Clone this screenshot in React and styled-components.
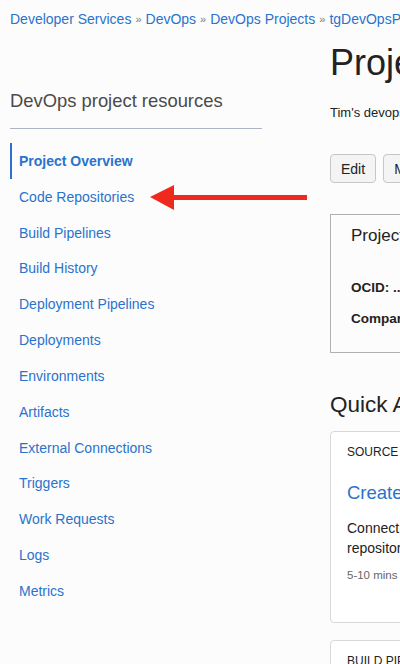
import React from "react";
import styled, { createGlobalStyle } from "styled-components";

const GlobalStyle = createGlobalStyle`
  html, body {
    margin: 0;
    padding: 0;
    background: #fcfcfc;
    overflow: hidden;
  }
  body {
    font-family: "Liberation Sans", Arial, sans-serif;
    color: #222;
  }
`;

const Page = styled.div`
  position: relative;
  width: 400px;
  height: 664px;
  overflow: hidden;
  padding: 9px 0 0 10px;
  box-sizing: border-box;
`;

const Breadcrumbs = styled.nav`
  display: flex;
  align-items: center;
  gap: 4px;
  height: 20px;
  font-size: 14px;
  white-space: nowrap;
`;

const Crumb = styled.a`
  color: #2a73cc;
  text-decoration: none;
`;

const Sep = styled.span`
  color: #777;
  font-size: 11px;
`;

const Columns = styled.div`
  display: flex;
  align-items: flex-start;
  gap: 68px;
`;

const Sidebar = styled.aside`
  flex: 0 0 252px;
  padding-top: 60px;
`;

const SideTitle = styled.h2`
  margin: 0;
  padding-bottom: 15px;
  border-bottom: 1px solid #aab4c2;
  font-size: 18.4px;
  font-weight: 400;
  line-height: 24px;
  color: #4a4a4a;
`;

const NavList = styled.ul`
  list-style: none;
  margin: 14px 0 0;
  padding: 0;
`;

const NavItem = styled.li`
  height: 35.83px;
  display: flex;
  align-items: center;
  padding-left: 7px;
  border-left: 2px solid ${({ $active }) => ($active ? "#2a73cc" : "transparent")};
  font-size: 14px;
  font-weight: ${({ $active }) => ($active ? 700 : 400)};
  color: #2a73cc;
  white-space: nowrap;
`;

const Main = styled.main`
  flex: 0 0 600px;
  padding-top: 12px;
`;

const Title = styled.h1`
  margin: 0;
  font-size: 36px;
  font-weight: 400;
  line-height: 44px;
  color: #222;
`;

const Description = styled.p`
  margin: 19px 0 0;
  font-size: 13px;
  line-height: 18px;
`;

const Actions = styled.div`
  display: flex;
  gap: 7px;
  margin-top: 32px;
`;

const Button = styled.button`
  height: 29px;
  padding: 0 10px;
  border: 1px solid #c4c8cc;
  border-radius: 4px;
  background: #f4f4f4;
  font-family: "Liberation Sans", Arial, sans-serif;
  font-size: 14px;
  color: #222;
`;

const InfoBox = styled.section`
  margin-top: 31px;
  height: 139px;
  box-sizing: border-box;
  border: 1px solid #b0b0b0;
  padding: 10px 20px 0;
`;

const InfoTitle = styled.div`
  font-size: 17px;
  line-height: 22px;
`;

const InfoRow = styled.div`
  margin-top: ${({ $gap }) => $gap}px;
  font-size: 13.5px;
  line-height: 18px;
  font-weight: 700;
  white-space: nowrap;
`;

const SectionTitle = styled.h2`
  margin: 39px 0 0;
  font-size: 22.5px;
  font-weight: 400;
  line-height: 26px;
  color: #222;
`;

const Card = styled.div`
  margin-top: ${({ $top }) => $top}px;
  height: ${({ $height }) => $height}px;
  box-sizing: border-box;
  border: 1px solid #d8d8d8;
  border-radius: 4px;
  padding: 12px 16px 0;
  background: #fff;
`;

const CardLabel = styled.div`
  font-size: 12px;
  line-height: 16px;
  text-transform: uppercase;
  color: #222;
`;

const CardLink = styled.div`
  margin-top: 22px;
  font-size: 18.5px;
  line-height: 22px;
  color: #2a73cc;
`;

const CardText = styled.p`
  margin: 14px 0 0;
  font-size: 14px;
  line-height: 20px;
  width: 200px;
`;

const CardMeta = styled.div`
  margin-top: 9px;
  font-size: 11.5px;
  line-height: 16px;
  color: #666;
`;

const Arrow = styled.svg`
  position: absolute;
  left: 150px;
  top: 185px;
`;

const crumbs = ["Developer Services", "DevOps", "DevOps Projects", "tgDevOpsProject"];

const navItems = [
  "Project Overview",
  "Code Repositories",
  "Build Pipelines",
  "Build History",
  "Deployment Pipelines",
  "Deployments",
  "Environments",
  "Artifacts",
  "External Connections",
  "Triggers",
  "Work Requests",
  "Logs",
  "Metrics",
];

const App = () => {
  return (
    <>
      <GlobalStyle />
      <Page>
        <Breadcrumbs>
          {crumbs.map((c, i) => (
            <React.Fragment key={c}>
              {i > 0 && <Sep>»</Sep>}
              <Crumb>{c}</Crumb>
            </React.Fragment>
          ))}
        </Breadcrumbs>

        <Columns>
          <Sidebar>
            <SideTitle>DevOps project resources</SideTitle>
            <NavList>
              {navItems.map((item, i) => (
                <NavItem key={item} $active={i === 0}>
                  {item}
                </NavItem>
              ))}
            </NavList>
          </Sidebar>

          <Main>
            <Title>Project Details</Title>
            <Description>Tim's devops project for code samples</Description>
            <Actions>
              <Button>Edit</Button>
              <Button>Move Resource</Button>
            </Actions>
            <InfoBox>
              <InfoTitle>Project information</InfoTitle>
              <InfoRow $gap={32}>OCID: ...xyz7q Show Copy</InfoRow>
              <InfoRow $gap={13}>Compartment: tgdevops</InfoRow>
            </InfoBox>

            <SectionTitle>Quick Actions</SectionTitle>
            <Card $top={13} $height={192}>
              <CardLabel>Source</CardLabel>
              <CardLink>Create or mirror a repository</CardLink>
              <CardText>Connect to an existing repository</CardText>
              <CardMeta>5-10 mins</CardMeta>
            </Card>
            <Card $top={17} $height={60}>
              <CardLabel>Build pipelines</CardLabel>
            </Card>
          </Main>
        </Columns>

        <Arrow width="158" height="26" viewBox="0 0 158 26">
          <polygon points="0,12 24,0 24,25" fill="#ee2a1e" />
          <rect x="22" y="10" width="135" height="5" fill="#ee2a1e" />
        </Arrow>
      </Page>
    </>
  );
};

export default App;
